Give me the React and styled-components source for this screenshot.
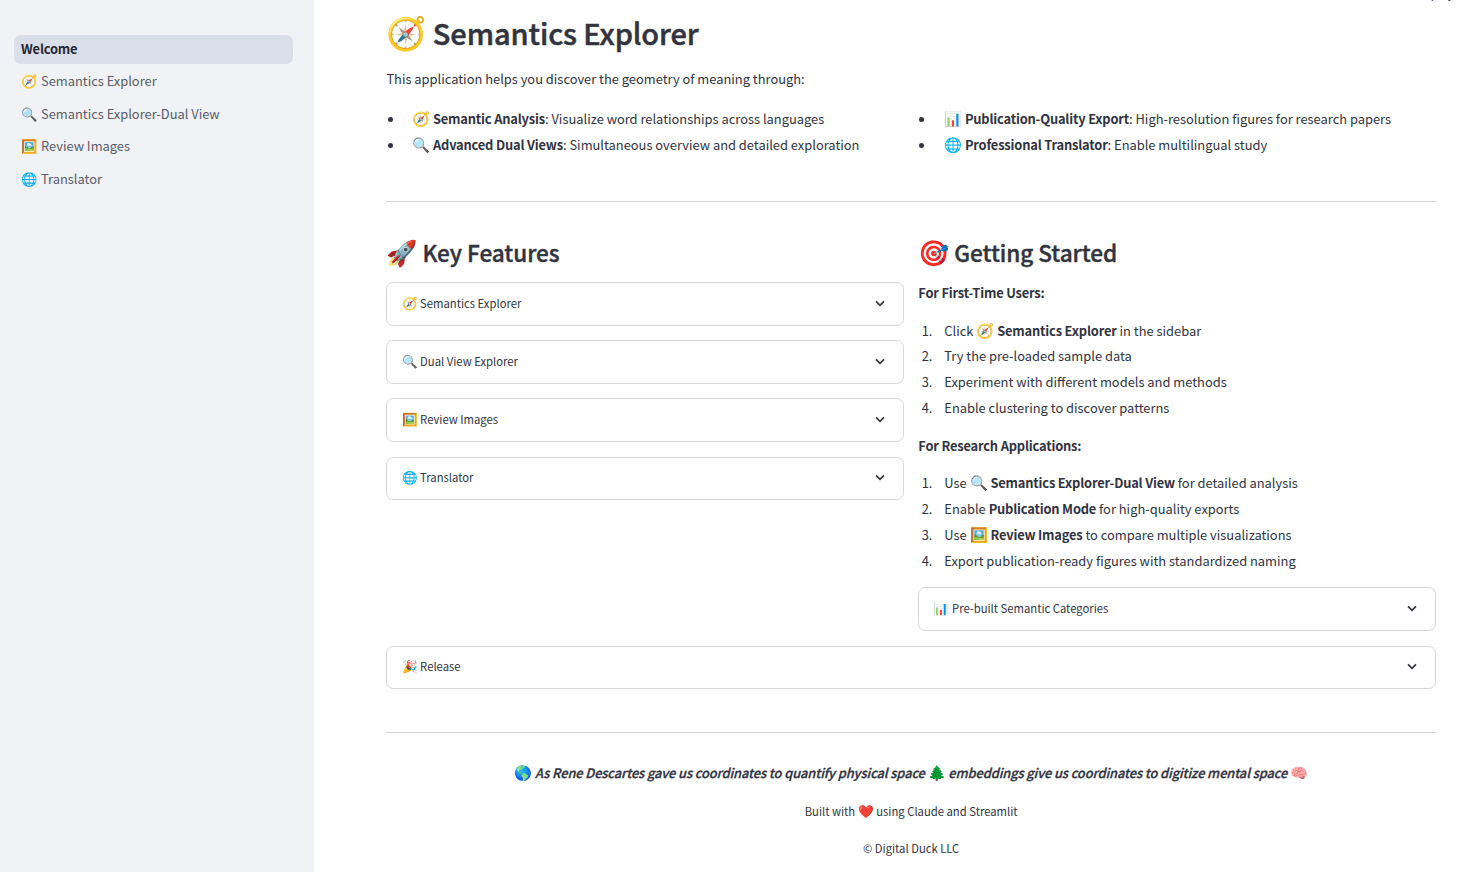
import React from "react";
import styled, { createGlobalStyle } from "styled-components";

const K = 0.895;
const px = (size) => `${(size * K).toFixed(3)}px`;

const Global = createGlobalStyle`
  * { box-sizing: border-box; }
  body {
    margin: 0;
    background: #fff;
    color: #31333f;
    font-family: "Noto Sans CJK SC", "Noto Sans", sans-serif;
    font-size: ${px(14.4)};
    line-height: 22.04px;
    overflow: hidden;
  }
  h1, h2, p, ul, ol { margin: 0; padding: 0; font-weight: 400; }
  p { padding-bottom: 1px; }
  b { font-weight: 600; letter-spacing: -0.014em; }
`;

const Page = styled.div`
  display: flex;
  height: 872px;
  overflow: hidden;
  position: relative;
`;

const Sidebar = styled.nav`
  flex: none;
  width: 314px;
  background: #f0f2f6;
  padding: 35.2px 21px 0 14.4px;
  display: flex;
  flex-direction: column;
  gap: 3.6px;
`;

const NavItem = styled.a`
  display: flex;
  align-items: center;
  gap: 4.4px;
  height: 28.8px;
  padding: 0 7.2px 1.2px 6.6px;
  border-radius: 7.2px;
  color: ${(p) => (p.$active ? "#262834" : "#5a5c68")};
  background: ${(p) => (p.$active ? "#dadee9" : "transparent")};
  font-weight: ${(p) => (p.$active ? 600 : 400)};
  letter-spacing: ${(p) => (p.$active ? "-0.014em" : "normal")};
`;

const NavIcon = styled.span`
  font-size: 13.2px;
  width: 15.6px;
`;

const Main = styled.main`
  flex: 1;
  min-width: 0;
  padding: 13.8px 35.2px 0 72.4px;
  display: flex;
  flex-direction: column;
`;

const Deploy = styled.div`
  position: absolute;
  top: -17px;
  right: 17.5px;
  font-size: ${px(12.6)};
  line-height: 20px;
`;

const Emoji = styled.span`
  font-size: ${(1 / K).toFixed(4)}em;
  line-height: 1;
  font-style: normal;
  letter-spacing: 0;
  -webkit-text-stroke: 0;
`;

const Title = styled.h1`
  font-size: ${px(32.4)};
  line-height: 37.9px;
  padding-bottom: 1px;
  font-weight: 500;
  letter-spacing: -0.003em;
  -webkit-text-stroke: 0.5px #31333f;
`;

const Heading = styled.h2`
  font-size: ${px(25.2)};
  line-height: 29.24px;
  padding-bottom: 1px;
  font-weight: 500;
  letter-spacing: -0.002em;
  -webkit-text-stroke: 0.4px #31333f;
  margin-bottom: 14.4px;
`;

const Intro = styled.p`
  margin-top: 15px;
`;

const Columns = styled.div`
  display: grid;
  grid-template-columns: 1fr 1fr;
  column-gap: 14.4px;
  margin-top: ${(p) => p.$top}px;
`;

const List = styled.ul`
  list-style: none;
  display: flex;
  flex-direction: column;
  gap: 2.88px;
`;

const Item = styled.li`
  display: flex;
  align-items: center;
  height: 23.04px;
  padding-bottom: 1px;
  white-space: nowrap;
`;

const Dot = styled.span`
  flex: none;
  width: 5px;
  height: 5px;
  border-radius: 50%;
  background: #31333f;
  margin: 1px 19.5px 0 1.2px;
`;

const Num = styled.span`
  flex: none;
  width: 26px;
  padding-left: 3.4px;
`;

const Rule = styled.hr`
  width: 100%;
  height: 1px;
  flex: none;
  border: 0;
  background: #d6d6d9;
  margin: ${(p) => p.$top}px 0 0;
`;

const Stack = styled.div`
  display: flex;
  flex-direction: column;
  gap: 14.4px;
`;

const Box = styled.div`
  display: flex;
  align-items: center;
  justify-content: space-between;
  height: 43.76px;
  flex: none;
  border: 1px solid #d6d6d9;
  border-radius: 7.2px;
  padding: 0 17px 0.8px 14.2px;
  font-size: ${px(12.6)};
  margin-top: ${(p) => p.$top || 0}px;
`;

const BoxLabel = styled.span`
  padding-bottom: 1.4px;
`;

const Lead = styled.p`
  font-weight: 600;
  letter-spacing: -0.014em;
  margin: ${(p) => p.$top || 0}px 0 14.32px;
`;

const Quote = styled.p`
  text-align: center;
  font-weight: 500;
  font-style: italic;
  letter-spacing: -0.0095em;
  -webkit-text-stroke: 0.3px #31333f;
  margin-top: 29px;
`;

const Small = styled.p`
  text-align: center;
  font-size: ${px(12.6)};
  line-height: 19px;
  margin-top: ${(p) => p.$top}px;
`;

const Chevron = () => (
  <svg width="12" height="12" viewBox="0 0 12 12" fill="none" stroke="#31333f" strokeWidth="1.6">
    <path d="M2 3.4 L6 7.4 L10 3.4" />
  </svg>
);

const Expander = ({ icon, children, top }) => (
  <Box $top={top}>
    <BoxLabel>
      <Emoji>{icon}</Emoji> {children}
    </BoxLabel>
    <Chevron />
  </Box>
);

const Bullet = ({ icon, title, children }) => (
  <Item>
    <Dot />
    <span>
      <Emoji>{icon}</Emoji> <b>{title}</b>: {children}
    </span>
  </Item>
);

const Steps = ({ items }) => (
  <List as="ol">
    {items.map((item, i) => (
      <Item key={i}>
        <Num>{i + 1}.</Num>
        <span>{item}</span>
      </Item>
    ))}
  </List>
);

const nav = [
  ["🧭", "Semantics Explorer"],
  ["🔍", "Semantics Explorer-Dual View"],
  ["🖼️", "Review Images"],
  ["🌐", "Translator"],
];

export default function App() {
  return (
    <Page>
      <Global />
      <Sidebar>
        <NavItem $active>Welcome</NavItem>
        {nav.map(([icon, label]) => (
          <NavItem key={label}>
            <NavIcon>{icon}</NavIcon>
            {label}
          </NavItem>
        ))}
      </Sidebar>
      <Main>
        <Title>
          <Emoji>🧭</Emoji> Semantics Explorer
        </Title>
        <Intro>This application helps you discover the geometry of meaning through:</Intro>
        <Columns $top={17.2}>
          <List>
            <Bullet icon="🧭" title="Semantic Analysis">Visualize word relationships across languages</Bullet>
            <Bullet icon="🔍" title="Advanced Dual Views">Simultaneous overview and detailed exploration</Bullet>
          </List>
          <List>
            <Bullet icon="📊" title="Publication-Quality Export">High-resolution figures for research papers</Bullet>
            <Bullet icon="🌐" title="Professional Translator">Enable multilingual study</Bullet>
          </List>
        </Columns>
        <Rule $top={43.7} />
        <Columns $top={36}>
          <div>
            <Heading>
              <Emoji>🚀</Emoji> Key Features
            </Heading>
            <Stack>
              <Expander icon="🧭">Semantics Explorer</Expander>
              <Expander icon="🔍">Dual View Explorer</Expander>
              <Expander icon="🖼️">Review Images</Expander>
              <Expander icon="🌐">Translator</Expander>
            </Stack>
          </div>
          <div>
            <Heading>
              <Emoji>🎯</Emoji> Getting Started
            </Heading>
            <Lead>For First-Time Users:</Lead>
            <Steps
              items={[
                <>Click <Emoji>🧭</Emoji> <b>Semantics Explorer</b> in the sidebar</>,
                "Try the pre-loaded sample data",
                "Experiment with different models and methods",
                "Enable clustering to discover patterns",
              ]}
            />
            <Lead $top={14.5}>For Research Applications:</Lead>
            <Steps
              items={[
                <>Use <Emoji>🔍</Emoji> <b>Semantics Explorer-Dual View</b> for detailed analysis</>,
                <>Enable <b>Publication Mode</b> for high-quality exports</>,
                <>Use <Emoji>🖼️</Emoji> <b>Review Images</b> to compare multiple visualizations</>,
                "Export publication-ready figures with standardized naming",
              ]}
            />
            <Expander icon="📊" top={14.4}>Pre-built Semantic Categories</Expander>
          </div>
        </Columns>
        <Expander icon="🎉" top={14.6}>Release</Expander>
        <Rule $top={42.8} />
        <Quote>
          <Emoji>🌎</Emoji> As Rene Descartes gave us coordinates to quantify physical space <Emoji>🌲</Emoji>{" "}
          embeddings give us coordinates to digitize mental space <Emoji>🧠</Emoji>
        </Quote>
        <Small $top={17}>
          Built with <Emoji>❤️</Emoji> using Claude and Streamlit
        </Small>
        <Small $top={17}>© Digital Duck LLC</Small>
      </Main>
      <Deploy>Deploy</Deploy>
    </Page>
  );
}
